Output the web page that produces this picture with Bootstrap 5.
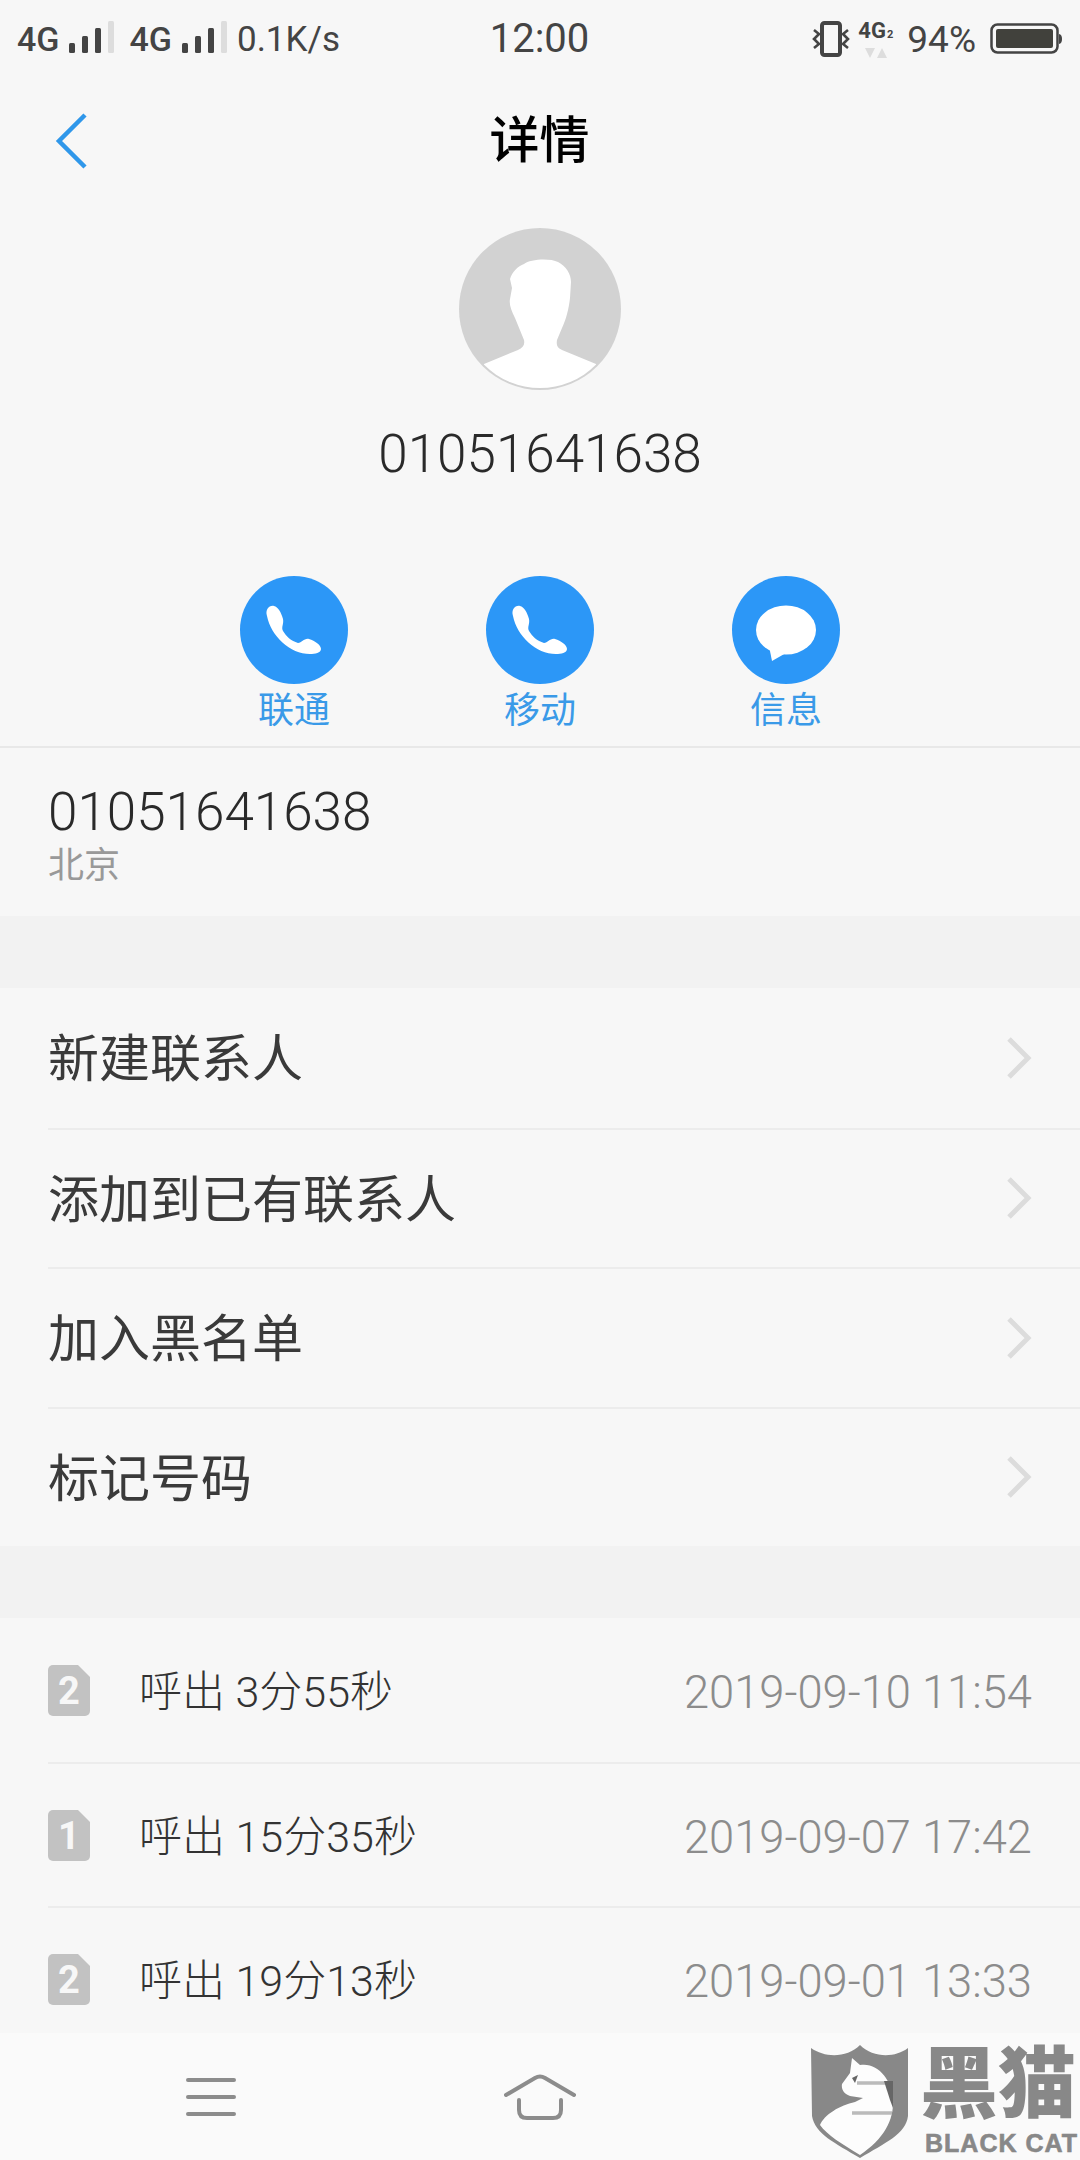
<!doctype html>
<html lang="zh">
<head>
<meta charset="utf-8">
<title>详情</title>
<link href="https://cdn.jsdelivr.net/npm/bootstrap@5.3.0/dist/css/bootstrap.min.css" rel="stylesheet">
<style>
html,body{width:1080px;height:2160px;overflow:hidden}
body{background:#f7f7f7;font-family:Roboto,"Noto Sans CJK SC",sans-serif;color:#3a3a3a}
.phone-screen{width:1080px;height:2160px;position:relative}
.status-row{height:78px;padding:0 18px 0 17px;display:grid;grid-template-columns:1fr auto 1fr;align-items:center;color:#444}
.net-label{font-size:34px;font-weight:500;line-height:1}
.speed-label{font-size:35px;line-height:1;margin-left:10px}
.clock-label{font-size:40px;line-height:1}
.bat-label{font-size:37px;line-height:1;margin:0 14px 0 13px}
.sig-icon{margin-left:10px;margin-right:15px}
.sig-icon.last-sig{margin-right:0}
.dual-net{width:36px;margin-left:8px}
.dual-net-text{font-size:22px;font-weight:700;line-height:22px;white-space:nowrap}
.dual-net-sub{font-size:11px;margin-left:1px}
.dual-net svg{display:block;margin:2px auto 0}
.title-row{height:126px;display:grid;grid-template-columns:1fr auto 1fr;align-items:center;padding-left:55px}
.title-text{font-size:50px;font-weight:500;color:#000;margin:0;line-height:1;transform:translateX(-28px)}
.avatar-shot{display:block;margin-top:24px}
.who-name{font-size:53px;line-height:60px;height:60px;margin-top:34px;margin-bottom:-1px;font-weight:300;color:#2a2a2a}
.action-row{margin-top:93px;height:170px;gap:138px}
.action-cell{width:108px;color:#3a9ae8;font-size:36px;line-height:50px;white-space:nowrap}
.action-cell span{margin-top:2px}
.action-disc{width:108px;height:108px;display:block}
.num-block{height:170px;padding:34px 48px 0;border-top:2px solid #e8e8e8}
.num-main{font-size:53px;line-height:60px;font-weight:300;color:#2a2a2a}
.num-sub{font-size:36px;line-height:46px;color:#999;margin-top:1px}
.band{height:72px;background:#f2f2f2}
.menu-stack{background:#f7f7f7}
.menu-stack .list-group-item{background:transparent;border:0;padding:0;margin-left:48px;padding-right:48px;color:#3a3a3a;font-size:51px;border-top:2px solid #ececec;height:139.5px}
.menu-stack .list-group-item:first-child{border-top:0}
.menu-label{margin-top:5px}
.log-stack{height:415px;overflow:hidden}
.log-stack .list-group-item{background:transparent;border:0;padding:0 48px 0 0;margin-left:48px;font-size:43px;font-weight:300;color:#333;height:144px;border-top:2px solid #ececec;flex-shrink:0}
.log-stack .list-group-item:first-child{border-top:0}
.log-main{margin-left:49px;margin-top:5px;flex:1;white-space:nowrap}
.log-time{color:#8c8c8c;font-size:45.3px;margin-top:5px;white-space:nowrap}
.bottom-row{height:127px;background:#fafafa;padding:0 46px;position:relative}
.bottom-slot{flex:1 1 0}
.cat-mark{position:absolute;left:800px;top:7px;width:280px;height:120px}
.cat-shield{position:absolute;left:0;top:0}
.cat-cn{position:absolute;left:120px;top:3px;font-size:78px;line-height:86px;font-weight:900;color:#888;white-space:nowrap}
.cat-en{position:absolute;left:125px;top:90px;font-family:"Liberation Sans",sans-serif;font-size:25px;line-height:26px;font-weight:700;color:#888;letter-spacing:1px;-webkit-text-stroke:.6px #888;white-space:nowrap}
</style>
</head>
<body>
<div class="phone-screen d-flex flex-column">
  <div class="status-row">
    <div class="d-flex align-items-center">
      <span class="net-label">4G</span>
      <svg class="sig-icon" width="45" height="36" viewBox="0 0 45 36"><rect x="0" y="22" width="6" height="10" rx="1.5" fill="#444"/><rect x="13" y="15" width="6" height="17" rx="1.5" fill="#444"/><rect x="26" y="7" width="6" height="25" rx="1.5" fill="#444"/><rect x="39" y="0" width="6" height="32" rx="1.5" fill="#ddd"/></svg>
      <span class="net-label">4G</span>
      <svg class="sig-icon last-sig" width="45" height="36" viewBox="0 0 45 36"><rect x="0" y="22" width="6" height="10" rx="1.5" fill="#444"/><rect x="13" y="15" width="6" height="17" rx="1.5" fill="#444"/><rect x="26" y="7" width="6" height="25" rx="1.5" fill="#444"/><rect x="39" y="0" width="6" height="32" rx="1.5" fill="#ddd"/></svg>
      <span class="speed-label">0.1K/s</span>
    </div>
    <div class="clock-label">12:00</div>
    <div class="d-flex align-items-center justify-content-end">
      <svg width="38" height="36" viewBox="0 0 38 36" fill="none" stroke="#444"><rect x="10" y="2" width="18" height="32" rx="2.5" stroke-width="4"/><path d="M2 9l5 4-5 5 5 5-5 4M36 9l-5 4 5 5-5 5 5 4" stroke-width="2.6"/></svg>
      <div class="dual-net">
        <div class="dual-net-text">4G<span class="dual-net-sub">2</span></div>
        <svg width="22" height="10" viewBox="0 0 22 10"><path d="M0 0h10L5 10zM12 10h10L17 0z" fill="#ddd"/></svg>
      </div>
      <span class="bat-label">94%</span>
      <svg width="72" height="32" viewBox="0 0 72 32"><rect x="1.500" y="1.500" width="66" height="28" rx="6" fill="none" stroke="#444" stroke-width="2.500"/><rect x="6" y="6" width="57" height="19" rx="2" fill="#41413c"/><path d="M69 11q3 .5 3 5t-3 5z" fill="#444"/></svg>
    </div>
  </div>

  <div class="title-row">
    <svg width="34" height="58" viewBox="0 0 34 58"><path d="M30 3L4 29l26 26" fill="none" stroke="#2f97ea" stroke-width="4.500"/></svg>
    <h1 class="title-text">详情</h1>
    <span></span>
  </div>

  <div class="d-flex flex-column align-items-center">
    <svg class="avatar-shot" width="162" height="162" viewBox="19 8 162 162">
      <defs><clipPath id="avaClip"><circle cx="100" cy="89" r="79"/></clipPath></defs>
      <circle cx="100" cy="89" r="81" fill="#d2d2d2"/>
      <path clip-path="url(#avaClip)" fill="#fff" d="M70 59C72 52 78 46 84 44C90 39 110 38 118 42C126 46 131 54 131 62L130 78C129 88 126 100 122 108L117 120C116 126 118 128 122 130L156 144L170 180H30L44 144L78 130C83 128 85 125 84 120L75 98C71 90 69 84 70 79L72 68Z"/>
    </svg>
    <div class="who-name">01051641638</div>
  </div>

  <div class="action-row d-flex justify-content-center">
    <div class="action-cell text-center d-flex flex-column align-items-center">
      <svg class="action-disc" viewBox="10 6 108 108"><circle cx="64" cy="60" r="54" fill="#2c97f7"/><path fill="#fff" d="M37 46C35 40 39 35 44 36C48 37 51 42 53 49C54 54 51 57 53 61C56 66 61 71 68 73C72 73 74 68 79 69C85 71 91 75 91 79C91 83 85 84 80 84C60 84 41 66 37 46Z"/></svg>
      <span>联通</span>
    </div>
    <div class="action-cell text-center d-flex flex-column align-items-center">
      <svg class="action-disc" viewBox="10 6 108 108"><circle cx="64" cy="60" r="54" fill="#2c97f7"/><path fill="#fff" d="M37 46C35 40 39 35 44 36C48 37 51 42 53 49C54 54 51 57 53 61C56 66 61 71 68 73C72 73 74 68 79 69C85 71 91 75 91 79C91 83 85 84 80 84C60 84 41 66 37 46Z"/></svg>
      <span>移动</span>
    </div>
    <div class="action-cell text-center d-flex flex-column align-items-center">
      <svg class="action-disc" viewBox="7 6 108 108"><circle cx="61" cy="60" r="54" fill="#2c97f7"/><ellipse cx="61" cy="60" rx="30" ry="24.500" fill="#fff"/><path fill="#fff" d="M44 76L47 91L61 83Z"/></svg>
      <span>信息</span>
    </div>
  </div>

  <div class="num-block">
    <div class="num-main">01051641638</div>
    <div class="num-sub">北京</div>
  </div>
  <div class="band"></div>

  <div class="list-group list-group-flush menu-stack">
    <div class="list-group-item d-flex align-items-center justify-content-between"><span class="menu-label">新建联系人</span><svg width="26" height="42" viewBox="0 0 26 42"><path d="M3 2l19 19L3 40" fill="none" stroke="#dcdcdc" stroke-width="5"/></svg></div>
    <div class="list-group-item d-flex align-items-center justify-content-between"><span class="menu-label">添加到已有联系人</span><svg width="26" height="42" viewBox="0 0 26 42"><path d="M3 2l19 19L3 40" fill="none" stroke="#dcdcdc" stroke-width="5"/></svg></div>
    <div class="list-group-item d-flex align-items-center justify-content-between"><span class="menu-label">加入黑名单</span><svg width="26" height="42" viewBox="0 0 26 42"><path d="M3 2l19 19L3 40" fill="none" stroke="#dcdcdc" stroke-width="5"/></svg></div>
    <div class="list-group-item d-flex align-items-center justify-content-between"><span class="menu-label">标记号码</span><svg width="26" height="42" viewBox="0 0 26 42"><path d="M3 2l19 19L3 40" fill="none" stroke="#dcdcdc" stroke-width="5"/></svg></div>
  </div>
  <div class="band"></div>

  <div class="list-group list-group-flush log-stack">
    <div class="list-group-item d-flex align-items-center">
      <svg width="42" height="51" viewBox="0 0 42 51"><path d="M5 0H30L42 12V46a5 5 0 0 1-5 5H5a5 5 0 0 1-5-5V5a5 5 0 0 1 5-5Z" fill="#c2c2c2"/><text x="21" y="39" text-anchor="middle" font-family="Roboto" font-weight="700" font-size="38" fill="#f7f7f7">2</text></svg>
      <span class="log-main">呼出 3分55秒</span><span class="log-time">2019-09-10 11:54</span>
    </div>
    <div class="list-group-item d-flex align-items-center">
      <svg width="42" height="51" viewBox="0 0 42 51"><path d="M5 0H30L42 12V46a5 5 0 0 1-5 5H5a5 5 0 0 1-5-5V5a5 5 0 0 1 5-5Z" fill="#c2c2c2"/><text x="21" y="39" text-anchor="middle" font-family="Roboto" font-weight="700" font-size="38" fill="#f7f7f7">1</text></svg>
      <span class="log-main">呼出 15分35秒</span><span class="log-time">2019-09-07 17:42</span>
    </div>
    <div class="list-group-item d-flex align-items-center">
      <svg width="42" height="51" viewBox="0 0 42 51"><path d="M5 0H30L42 12V46a5 5 0 0 1-5 5H5a5 5 0 0 1-5-5V5a5 5 0 0 1 5-5Z" fill="#c2c2c2"/><text x="21" y="39" text-anchor="middle" font-family="Roboto" font-weight="700" font-size="38" fill="#f7f7f7">2</text></svg>
      <span class="log-main">呼出 19分13秒</span><span class="log-time">2019-09-01 13:33</span>
    </div>
  </div>

  <div class="bottom-row d-flex align-items-center">
    <div class="bottom-slot d-flex justify-content-center">
      <svg width="50" height="38" viewBox="0 0 50 38"><path d="M2 2h46M2 19h46M2 36h46" stroke="#8c8c8c" stroke-width="4" stroke-linecap="round"/></svg>
    </div>
    <div class="bottom-slot d-flex justify-content-center">
      <svg width="72" height="46" viewBox="25 23 72 46" fill="none" stroke="#8c8c8c" stroke-width="4" stroke-linecap="round"><path d="M27 44L56 27Q61 24 66 27L95 44"/><path d="M40 49V59Q40 67 48 67H74Q82 67 82 59V49"/></svg>
    </div>
    <div class="bottom-slot"></div>
    <div class="cat-mark">
      <svg class="cat-shield" width="120" height="120" viewBox="0 0 120 120">
        <path fill="#888" d="M11 8C25 18 47 18 60 5C73 18 95 18 108 8V76C106 94 85 103 60 118C35 103 15 94 12 76Z"/>
        <path fill="#fdfdfd" d="M52 18L60 25C78 22 92 40 93 60C94 80 84 99 60 115C42 104 27 95 20 85C24 75 40 65 55 62L63 58L50 56C44 54 41 49 42 44L50 33Z"/>
        <path fill="#666" d="M52 38l6-3-3 8z"/>
        <path d="M57 43H90M52 73H92" stroke="#bbb" stroke-width="3.500"/>
        <path d="M84 41H93V68L90 60Z" fill="#666"/>
      </svg>
      <span class="cat-cn">黑猫</span>
      <span class="cat-en">BLACK CAT</span>
    </div>
  </div>
</div>
<script src="https://cdn.jsdelivr.net/npm/bootstrap@5.3.0/dist/js/bootstrap.bundle.min.js"></script>
</body>
</html>
